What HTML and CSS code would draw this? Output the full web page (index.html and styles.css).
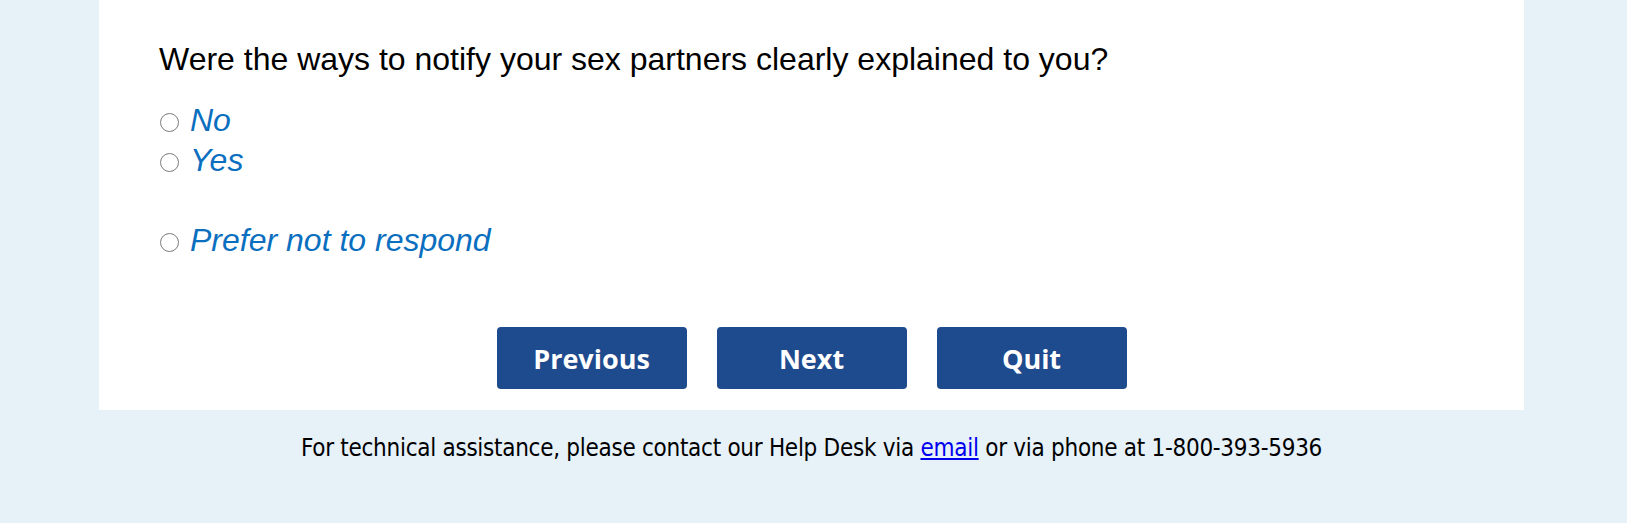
FILE: index.html
```html
<!DOCTYPE html>
<html lang="en">
<head>
<meta charset="utf-8">
<title>Survey</title>
<link rel="stylesheet" href="styles.css">
</head>
<body>
<div class="page">
  <main class="panel">
    <form class="question-form">
      <p class="question">Were the ways to notify your sex partners clearly explained to you?</p>
      <div class="options">
        <label class="option"><input type="radio" name="q" class="radio"><span class="option-text">No</span></label>
        <label class="option"><input type="radio" name="q" class="radio"><span class="option-text">Yes</span></label>
        <div class="spacer"></div>
        <label class="option"><input type="radio" name="q" class="radio"><span class="option-text">Prefer not to respond</span></label>
      </div>
      <div class="buttons">
        <button type="button" class="btn">Previous</button>
        <button type="button" class="btn">Next</button>
        <button type="button" class="btn">Quit</button>
      </div>
    </form>
  </main>
  <footer class="footer">
    For technical assistance, please contact our Help Desk via <a href="#" class="link">email</a> or via phone at 1-800-393-5936
  </footer>
</div>
</body>
</html>
```
FILE: styles.css
```css
html, body {
  margin: 0;
  padding: 0;
}
body {
  background: #e6f1f8;
  font-family: "Liberation Sans", Arial, sans-serif;
  height: 523px;
  overflow: hidden;
}
.page {
  width: 1425px;
  margin-left: 99px;
}
.panel {
  background: #ffffff;
  height: 410px;
  box-sizing: border-box;
  padding: 39px 0 0 60px;
}
.question-form {
  display: flex;
  flex-direction: column;
}
.question {
  margin: 0;
  font-size: 32px;
  line-height: 40px;
  color: #000000;
}
.options {
  margin-top: 21px;
  display: flex;
  flex-direction: column;
}
.option {
  display: flex;
  align-items: center;
  height: 40px;
  line-height: 40px;
}
.spacer {
  height: 40px;
}
.radio {
  appearance: none;
  -webkit-appearance: none;
  margin: 0 11px 0 1px;
  width: 19px;
  height: 19px;
  border: 1.5px solid #7a7a7a;
  border-radius: 50%;
  background: #ffffff;
  box-sizing: border-box;
  position: relative;
  top: 2px;
}
.option-text {
  font-size: 32px;
  font-style: italic;
  color: #0b6fc0;
}
.buttons {
  display: flex;
  justify-content: center;
  gap: 30px;
  margin-top: 67px;
  margin-left: -60px;
}
.btn {
  width: 190px;
  height: 62px;
  background: #1e4a8e;
  color: #ffffff;
  border: none;
  border-radius: 4px;
  font-family: "Open Sans", sans-serif;
  font-weight: 700;
  font-size: 27px;
  padding: 0;
}
.footer {
  text-align: center;
  font-family: "DejaVu Sans Condensed", "DejaVu Sans", sans-serif;
  font-stretch: condensed;
  font-size: 24px;
  letter-spacing: -0.28px;
  color: #000000;
  padding-top: 19px;
  line-height: 38px;
}
.link {
  color: #0000ee;
  text-decoration: underline;
}
```
